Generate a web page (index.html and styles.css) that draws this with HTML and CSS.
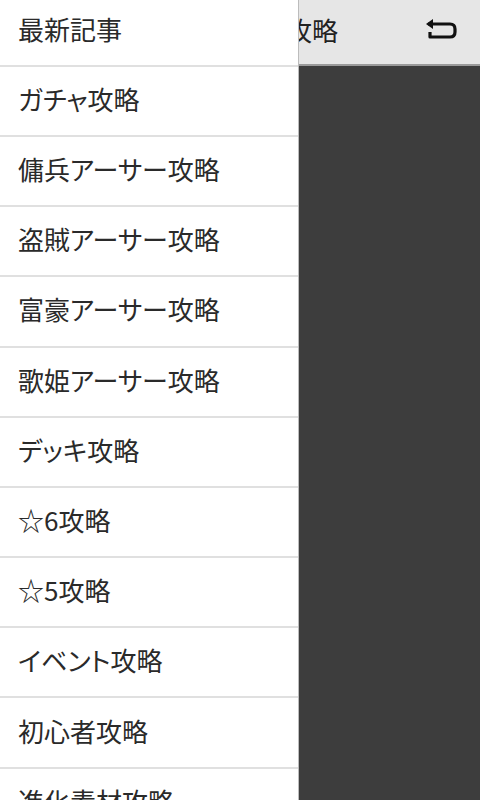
FILE: index.html
```html
<!DOCTYPE html>
<html lang="ja">
<head>
<meta charset="utf-8">
<link rel="stylesheet" href="styles.css">
</head>
<body>
<div class="app">
  <header class="topbar">
    <div class="title">アーサー攻略</div>
    <div class="back">
      <svg width="36" height="28" viewBox="0 0 36 28">
        <path d="M6 8 H28 Q33 8 33 13 V16 Q33 21 28 21 H8 V16" fill="none" stroke="#111" stroke-width="3.2" stroke-linejoin="round"/>
        <path d="M4 8 L11 3 V13 Z" fill="#111"/>
      </svg>
    </div>
  </header>
  <main class="content"></main>
  <nav class="drawer">
    <ul class="menu">
      <li class="item"><span>最新記事</span></li>
      <li class="item"><span>ガチャ攻略</span></li>
      <li class="item"><span>傭兵アーサー攻略</span></li>
      <li class="item"><span>盗賊アーサー攻略</span></li>
      <li class="item"><span>富豪アーサー攻略</span></li>
      <li class="item"><span>歌姫アーサー攻略</span></li>
      <li class="item"><span>デッキ攻略</span></li>
      <li class="item"><span>☆6攻略</span></li>
      <li class="item"><span>☆5攻略</span></li>
      <li class="item"><span>イベント攻略</span></li>
      <li class="item"><span>初心者攻略</span></li>
      <li class="item"><span>進化素材攻略</span></li>
    </ul>
  </nav>
</div>
</body>
</html>
```
FILE: styles.css
```css
html, body {
  margin: 0;
  padding: 0;
  height: 100%;
  background: #3d3d3d;
  font-family: "Noto Sans CJK JP", "Noto Sans", sans-serif;
  overflow: hidden;
}
.app {
  position: relative;
  width: 480px;
  height: 800px;
  display: flex;
  flex-direction: column;
}
.topbar {
  height: 64px;
  background: #e6e6e6;
  border-bottom: 2px solid #9a9a9a;
  display: flex;
  align-items: center;
  padding-left: 184px;
  padding-right: 22px;
  flex-shrink: 0;
}
.title {
  flex: 1;
  font-size: 26px;
  color: #222;
  white-space: nowrap;
  padding-bottom: 6px;
}
.back {
  display: flex;
  align-items: center;
  padding-bottom: 4px;
}
.content {
  flex: 1;
  background: #3d3d3d;
}
.drawer {
  position: absolute;
  left: 0;
  top: 0;
  width: 298px;
  height: 800px;
  background: #fff;
  border-right: 1px solid #bcbcbc;
  overflow: hidden;
}
.menu {
  list-style: none;
  margin: -3.4px 0 0 0;
  padding: 0;
}
.item {
  box-sizing: border-box;
  height: 70.2px;
  border-bottom: 2px solid #e0e0e0;
  display: flex;
  align-items: center;
  padding: 0 0 5px 18px;
  font-size: 26px;
  color: #2a2a2a;
  white-space: nowrap;
  font-feature-settings: "palt";
}
```
